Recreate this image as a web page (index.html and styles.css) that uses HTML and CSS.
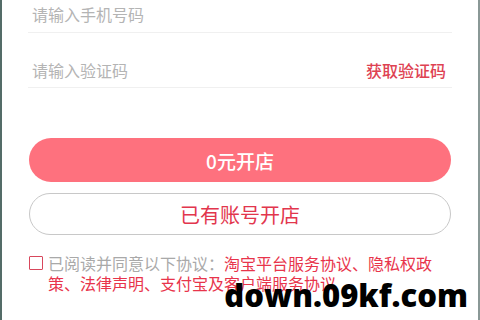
FILE: index.html
```html
<!DOCTYPE html>
<html lang="zh-CN">
<head>
<meta charset="utf-8">
<link rel="stylesheet" href="styles.css">
</head>
<body>
<div class="page">
  <div class="field field-phone">
    <span class="placeholder">请输入手机号码</span>
  </div>
  <div class="field field-code">
    <span class="placeholder">请输入验证码</span>
    <span class="get-code">获取验证码</span>
  </div>
  <div class="actions">
    <div class="btn btn-primary">0元开店</div>
    <div class="btn btn-outline">已有账号开店</div>
  </div>
  <div class="agree">
    <span class="checkbox"></span>
    <p class="agree-text"><span class="muted">已阅读并同意以下协议：</span><span class="link">淘宝平台服务协议、隐私权政策、法律声明、支付宝及客户端服务协议</span></p>
  </div>
  <div class="watermark">down.09kf.com</div>
</div>
</body>
</html>
```
FILE: styles.css
```css
* { box-sizing: border-box; }
html, body { margin: 0; padding: 0; }
body {
  width: 480px;
  height: 320px;
  overflow: hidden;
  background: #ffffff;
  font-family: "Noto Sans CJK SC", "Noto Sans", sans-serif;
}
.page {
  position: relative;
  height: 320px;
  border-left: 2px solid #546c68;
  border-right: 2px solid #8a9896;
  padding: 3px 26px 0 26px;
}
.field {
  display: flex;
  align-items: center;
  justify-content: space-between;
  border-bottom: 1px solid #f0f0f0;
  font-size: 16px;
  line-height: 22px;
}
.field-phone { padding: 0 4px 7px 4px; }
.field-code { padding: 26px 4px 6px 4px; }
.placeholder { color: #b4b4b4; }
.get-code { color: #de4252; font-weight: 500; margin-right: 2px; }
.actions {
  display: flex;
  flex-direction: column;
  gap: 11px;
  margin-top: 50px;
  padding: 0 1px;
}
.btn {
  display: flex;
  align-items: center;
  justify-content: center;
  border-radius: 22px;
}
.btn-primary {
  height: 44px;
  background: #fe717e;
  color: #ffffff;
  font-size: 19px;
  font-weight: 500;
}
.btn-outline {
  height: 42px;
  border: 1px solid #c8c8c8;
  color: #e2364d;
  font-size: 20px;
}
.agree {
  display: flex;
  align-items: flex-start;
  gap: 5px;
  margin-top: 18px;
  padding-left: 1px;
}
.checkbox {
  flex: none;
  width: 14px;
  height: 14px;
  margin-top: 3px;
  border: 1.5px solid #d8475c;
  border-radius: 1px;
}
.agree-text {
  margin: 0;
  width: 392px;
  font-size: 16px;
  line-height: 20px;
}
.muted { color: #a9a9a9; }
.link { color: #e8344b; }
.watermark {
  position: absolute;
  right: 10px;
  top: 275px;
  font-family: "Open Sans", "Liberation Sans", sans-serif;
  font-weight: 800;
  font-size: 31px;
  line-height: 40px;
  color: #000000;
}
```
